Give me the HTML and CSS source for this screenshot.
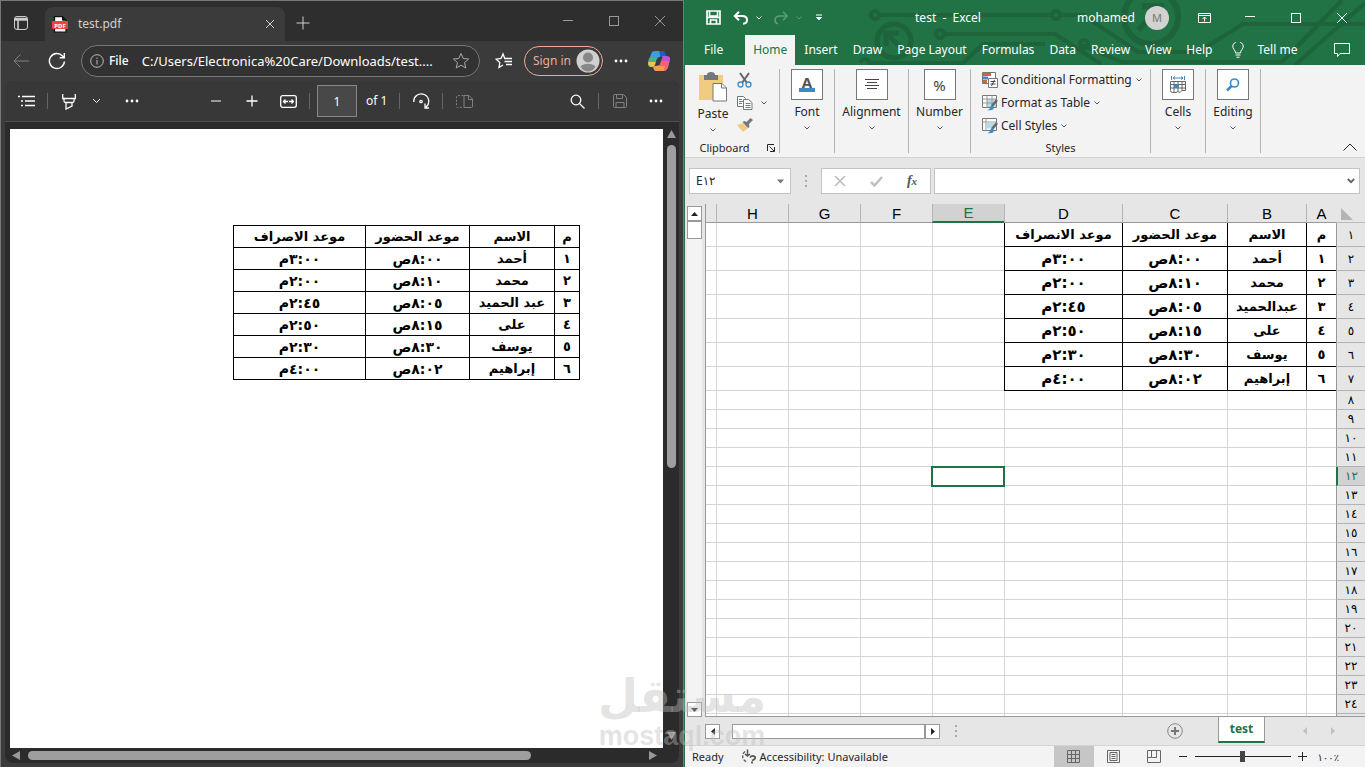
FILE: index.html
```html
<!DOCTYPE html>
<html lang="en">
<head>
<meta charset="utf-8">
<title>Desktop</title>
<link rel="stylesheet" href="styles.css">
</head>
<body>
<main class="desktop">
<section class="edge" aria-label="PDF viewer">
  <header class="edge-tabs">
    <button class="tab-actions" aria-label="Tab actions"><svg width="16" height="16" viewBox="0 0 16 16"><rect x="1.5" y="1.5" width="13" height="13" rx="2.5"/><path d="M2 3.500h12M2 5h12M5 5v9.500" stroke-width="1.6"/></svg></button>
    <div class="edge-tab">
      <svg width="16" height="17" viewBox="0 0 16 17"><path d="M2.500 .7h8l3.500 3.500v12h-11.500z" fill="#fff" stroke="#111" stroke-width="1.300"/><path d="M10.500 .7v3.500H14" fill="#111" stroke="#111"/><rect x="0" y="5" width="16" height="8" rx="1" fill="#ea4444" stroke="none"/><text x="8" y="11.500" class="pdf-badge" text-anchor="middle">PDF</text></svg>
      <span class="tab-name">test.pdf</span>
      <button class="tab-close" aria-label="Close tab"><svg width="10" height="10" viewBox="0 0 10 10"><path d="M1 1l8 8M9 1L1 9"/></svg></button>
    </div>
    <button class="new-tab" aria-label="New tab"><svg width="14" height="14" viewBox="0 0 14 14"><path d="M7 .5v13M.5 7h13"/></svg></button>
    <div class="win-controls dim">
      <button aria-label="Minimize"><svg width="10" height="10" viewBox="0 0 10 10"><path d="M0 4.500h10"/></svg></button>
      <button aria-label="Maximize"><svg width="10" height="10" viewBox="0 0 10 10"><rect x=".5" y=".5" width="9" height="9"/></svg></button>
      <button aria-label="Close"><svg width="10" height="10" viewBox="0 0 10 10"><path d="M0 0l10 10M10 0L0 10"/></svg></button>
    </div>
  </header>
  <nav class="edge-nav">
    <button class="tool faded" aria-label="Back"><svg width="16" height="14" viewBox="0 0 16 14"><path d="M16 7H1M7.500 .5L1 7l6.500 6.500"/></svg></button>
    <button class="tool" aria-label="Refresh"><svg width="18" height="18" viewBox="0 0 18 18" stroke-width="1.400"><path d="M16.400 9.500A7.500 7.500 0 1 1 14.500 4L16 5.500M16.300 1v4.700h-4.600"/></svg></button>
    <div class="address">
      <svg width="14" height="14" viewBox="0 0 14 14"><circle cx="7" cy="7" r="6.300"/><path d="M7 6v4.500M7 3.600v1.300"/></svg>
      <span class="scheme">File</span>
      <input class="url" aria-label="Address" value="C:/Users/Electronica%20Care/Downloads/test....">
      <button aria-label="Add favorite"><svg width="18" height="18" viewBox="0 0 18 18" stroke="#aaa"><path d="M9 1.500l2.200 5 5.400.5-4.100 3.600 1.300 5.400L9 13.200 4.200 16l1.300-5.400L1.400 7l5.400-.5z"/></svg></button>
    </div>
    <button class="tool fav" aria-label="Favorites"><svg width="18" height="18" viewBox="0 0 18 18"><path d="M12 6.500H9.800L8 2 6 6.500l-4.800.7 3.600 3.300L4 15.500l4-2.500M10.500 6.500H17M9.500 9.500H17M11 12.500h6" stroke-width="1.300"/></svg></button>
    <button class="sign-in">Sign in <svg width="24" height="24" viewBox="0 0 24 24" stroke="none"><circle cx="12" cy="12" r="11.500" fill="#d0d0d0"/><circle cx="12" cy="8.500" r="5" fill="#888"/><path d="M4.500 17q7.500-4.500 15 0-1.500 5-7.500 5.500-6-.5-7.500-5.500z" fill="#888"/></svg></button>
    <button class="tool" aria-label="Settings"><svg width="14" height="4" viewBox="0 0 14 4" fill="#fff" stroke="none"><circle cx="2" cy="2" r="1.400"/><circle cx="7" cy="2" r="1.400"/><circle cx="12" cy="2" r="1.400"/></svg></button>
    <button class="tool copilot" aria-label="Copilot"><svg width="24" height="22" viewBox="0 0 24 22" stroke="none"><path d="M8 1h6q2 0 2.500 3l-4 3q-2 0-3 3l-1 4q-.5 3-3 3H4q-3 0-3-4L4 4q1-3 4-3z" fill="#3aa0dc"/><path d="M2 8h7.500l-1.500 6q-1 3-4 3-3 0-3-4z" fill="#55ae83"/><path d="M1.200 12h7.300q-1 5-3.500 5-4 0-3.800-5z" fill="#edc443"/><path d="M12 1h4q2 0 2.500 3l1 3h-6z" fill="#1761c5"/><path d="M15.500 6H20q3.500 0 3 4l-2 7q-1 4-4.500 4H9q-2 0-2.500-3L6 16h3q2 0 3-3z" fill="#bd56c6"/><path d="M13 11h9.500l-1.500 6q-1 4-4.500 4h-5z" fill="#f2627a"/><path d="M6 16h12l-1 5H9q-2 0-3-5z" fill="#f69a4b"/><path d="M13.500 7h2l-3 8h-2.500z" fill="#3b3b3b"/></svg></button>
  </nav>
  <div class="viewer">
    <div class="pdf-tools">
      <button class="tool" aria-label="Contents"><svg width="17" height="12" viewBox="0 0 17 12" stroke-width="1.300"><path d="M4 1.500h13M7 6h10M7 10.500h10M0 1.500h2M3 6h2M3 10.500h2"/></svg></button>
      <i class="vsep"></i>
      <button class="tool" aria-label="Highlight"><svg width="14" height="17" viewBox="0 0 14 17" stroke-width="1.300"><path d="M.7 1v4.500h12.600V1M2 5.500V8q0 1.500 1.500 1.500h7Q12 9.500 12 8V5.500M4 9.500V16l6-3V9.500"/></svg></button>
      <button class="tool slim" aria-label="Highlight options"><svg width="9" height="6" viewBox="0 0 9 6"><path d="M1 1l3.500 3.500L8 1"/></svg></button>
      <button class="tool more" aria-label="More tools"><svg width="14" height="4" viewBox="0 0 14 4" fill="#fff" stroke="none"><circle cx="2" cy="2" r="1.400"/><circle cx="7" cy="2" r="1.400"/><circle cx="12" cy="2" r="1.400"/></svg></button>
      <button class="tool zoom-out" aria-label="Zoom out"><svg width="12" height="12" viewBox="0 0 12 12"><path d="M1 6h10" stroke-width="1.500" stroke="#bbb"/></svg></button>
      <button class="tool" aria-label="Zoom in"><svg width="12" height="12" viewBox="0 0 12 12" stroke-width="1.300"><path d="M6 .5v11M.5 6h11"/></svg></button>
      <button class="tool" aria-label="Fit to width"><svg width="17" height="13" viewBox="0 0 17 13" stroke-width="1.300"><rect x=".7" y=".7" width="15.600" height="11.600" rx="2"/><path d="M3.500 6.500h10M5.500 4.500l-2 2 2 2M11.500 4.500l2 2-2 2"/><path d="M8 6.500h1" stroke="#383838"/></svg></button>
      <i class="vsep"></i>
      <input class="page-no" aria-label="Page" value="1">
      <span class="page-of">of 1</span>
      <i class="vsep"></i>
      <button class="tool" aria-label="Rotate"><svg width="17" height="17" viewBox="0 0 17 17" stroke-width="1.300"><path d="M.8 9A7.500 7.500 0 1 1 13 14.200M12 10.500v4.500h4"/><circle cx="8" cy="8.500" r="1.200"/></svg></button>
      <i class="vsep"></i>
      <button class="tool faded" aria-label="Page view"><svg width="17" height="13" viewBox="0 0 17 13"><path d="M7.500 .6H1.500q-1 0-1 1v9.800q0 1 1 1h6" stroke-dasharray="2 1.500"/><path d="M8 .5h5l3.500 3.500v7.500q0 1-1 1H8zM12.500 .5V4.500h4"/></svg></button>
      <span class="spacer"></span>
      <button class="tool" aria-label="Find"><svg width="15" height="15" viewBox="0 0 15 15" stroke-width="1.300"><circle cx="6" cy="6" r="4.800"/><path d="M9.500 9.500l5 5"/></svg></button>
      <i class="vsep"></i>
      <button class="tool faded" aria-label="Save"><svg width="14" height="14" viewBox="0 0 14 14"><path d="M1.500 .5h9l3 3v9q0 1-1 1h-11q-1 0-1-1v-11q0-1 1-1zM3.500 .5v4h6v-4M3 13.500v-5h8v5"/></svg></button>
      <button class="tool" aria-label="More"><svg width="14" height="4" viewBox="0 0 14 4" fill="#fff" stroke="none"><circle cx="2" cy="2" r="1.400"/><circle cx="7" cy="2" r="1.400"/><circle cx="12" cy="2" r="1.400"/></svg></button>
    </div>
    <div class="doc-area">
      <article class="page" dir="rtl" lang="ar">
        <table class="pdf-table">
          <colgroup><col class="p-num"><col class="p-name"><col class="p-in"><col class="p-out"></colgroup>
          <tr><th>م</th><th>الاسم</th><th>موعد الحضور</th><th>موعد الاصراف</th></tr>
          <tr><td>١</td><td>أحمد</td><td class="time">٨:٠٠ص</td><td class="time">٣:٠٠م</td></tr>
          <tr><td>٢</td><td>محمد</td><td class="time">٨:١٠ص</td><td class="time">٢:٠٠م</td></tr>
          <tr><td>٣</td><td>عبد الحميد</td><td class="time">٨:٠٥ص</td><td class="time">٢:٤٥م</td></tr>
          <tr><td>٤</td><td>على</td><td class="time">٨:١٥ص</td><td class="time">٢:٥٠م</td></tr>
          <tr><td>٥</td><td>يوسف</td><td class="time">٨:٣٠ص</td><td class="time">٢:٣٠م</td></tr>
          <tr><td>٦</td><td>إبراهيم</td><td class="time">٨:٠٢ص</td><td class="time">٤:٠٠م</td></tr>
        </table>
      </article>
      <div class="pdf-vscroll"><svg width="9" height="8" viewBox="0 0 9 8"><path d="M4.500 0L9 8H0z"/></svg><i class="thumb"></i><svg width="9" height="8" viewBox="0 0 9 8"><path d="M4.500 8L9 0H0z"/></svg></div>
    </div>
    <div class="pdf-hscroll"><svg width="8" height="9" viewBox="0 0 8 9"><path d="M0 4.500L8 0v9z"/></svg><i class="thumb"></i><svg width="8" height="9" viewBox="0 0 8 9"><path d="M8 4.500L0 0v9z"/></svg></div>
  </div>
</section>

<section class="excel" aria-label="Excel">
  <header class="xl-head">
    <svg class="circuit" width="510" height="65" viewBox="0 0 510 65"><g fill="none" stroke="#1d633c" stroke-width="4"><circle cx="20" cy="15" r="4"/><path d="M25 15h155"/><circle cx="85" cy="34" r="4"/><path d="M90 34h105"/><circle cx="39" cy="41" r="17" stroke-width="5"/><path d="M48 50L32 34M31 46V33h13" stroke-width="5"/><path d="M6 63a4 4 0 0 1 8 0h94l20-19h62M180 15h17M206 15h22l55 37h60l45-28h122M180 34h20l46 30M227 45l40 17h160M427 62l60-62M440 65l70-62"/><circle cx="201" cy="15" r="4"/><circle cx="229" cy="44" r="4"/><circle cx="296" cy="17" r="27" stroke-width="6"/><path d="M283 30l22-22M287 6h19v18" stroke-width="6"/></g></svg>
    <div class="xl-title">
      <button class="q-save" aria-label="Save"><svg width="15" height="15" viewBox="0 0 15 15" stroke-width="1.700"><path d="M1 1h13v13H1zM3.500 1v5h8V1M1 7.500h13M4.500 14v-4h6v4"/></svg></button>
      <button class="q-btn" aria-label="Undo"><svg width="16" height="14" viewBox="0 0 16 14" stroke-width="2"><path d="M6 .8L1.800 5 6 9.200M2 5h7q5 0 5 4 0 3.500-4 3.800"/></svg></button>
      <button class="q-chev" aria-label="Undo list"><svg width="6" height="4" viewBox="0 0 6 4"><path d="M.5 .5L3 3 5.500 .5"/></svg></button>
      <button class="q-btn q-off" aria-label="Redo"><svg width="16" height="14" viewBox="0 0 16 14" stroke-width="1.500"><path d="M10 .8L14.200 5 10 9.200M14 5H7Q2 5 2 9q0 3.500 3 3.800"/></svg></button>
      <button class="q-chev q-off" aria-label="Redo list"><svg width="6" height="4" viewBox="0 0 6 4"><path d="M.5 .5L3 3 5.500 .5"/></svg></button>
      <button class="q-chev q-custom" aria-label="Customize toolbar"><svg width="6" height="7" viewBox="0 0 6 7"><path d="M0 1h6"/><path d="M.5 3.500h5L3 6z" fill="#fff"/></svg></button>
      <span class="doc-title">test&nbsp; -&nbsp; Excel</span>
      <span class="user">mohamed</span><span class="avatar">M</span>
      <div class="win-controls">
        <button aria-label="Ribbon options"><svg width="13" height="10" viewBox="0 0 13 10"><path d="M.5 .5h12v9H.5zM.5 2.500h12M6.500 8.500V4M4.500 6l2-2 2 2"/></svg></button>
        <button aria-label="Minimize"><svg width="10" height="10" viewBox="0 0 10 10"><path d="M0 3.500h10"/></svg></button>
        <button aria-label="Maximize"><svg width="10" height="10" viewBox="0 0 10 10"><rect x=".5" y=".5" width="9" height="9"/></svg></button>
        <button aria-label="Close"><svg width="10" height="10" viewBox="0 0 10 10"><path d="M0 0l10 10M10 0L0 10"/></svg></button>
      </div>
    </div>
    <nav class="xl-tabs">
      <button class="file">File</button><button class="active">Home</button><button>Insert</button><button>Draw</button><button>Page Layout</button><button>Formulas</button><button>Data</button><button>Review</button><button>View</button><button>Help</button>
      <button class="tell"><svg width="12" height="16" viewBox="0 0 12 16"><path d="M3.500 11q0-2-1.500-3.500a5 5 0 1 1 8 0Q8.500 9 8.500 11zM3.500 13h5M4.500 15.200h3"/></svg>Tell me</button>
      <button class="comment" aria-label="Comments"><svg width="16" height="15" viewBox="0 0 16 15"><path d="M.5 .5h15v10H6l-2.500 3v-3h-3z"/></svg></button>
    </nav>
  </header>

  <div class="ribbon">
    <div class="group clipboard">
      <div class="clip-body">
        <button class="paste"><svg width="30" height="30" viewBox="0 0 30 30" stroke="none"><path d="M1 3h24v25H1z" fill="#f0cb80"/><path d="M6 3h3q0-3 4-3t4 3h3v5H6z" fill="#777"/><path d="M15 11.500h9l4.500 4.500v13H15z" fill="#fff" stroke="#777"/><path d="M23.500 11.500V16h5" fill="none" stroke="#777"/></svg><span>Paste</span><svg class="cv" width="6" height="4" viewBox="0 0 6 4"><path d="M.5 .5L3 3 5.500 .5"/></svg></button>
        <div class="clip-side">
          <button aria-label="Cut"><svg width="15" height="16" viewBox="0 0 15 16"><path d="M3 1l7 10M12 1L5 11" stroke="#666" stroke-width="2"/><circle cx="3.500" cy="12.500" r="2.500" stroke="#3a8ac8" stroke-width="1.300"/><circle cx="11.500" cy="12.500" r="2.500" stroke="#3a8ac8" stroke-width="1.300"/></svg></button>
          <button aria-label="Copy"><svg width="16" height="14" viewBox="0 0 16 14"><path d="M.5 .5h6l2 2v8h-8z" fill="#fff" stroke="#777"/><path d="M2 3.500h3M2 5.500h4M2 7.500h3" stroke="#3a8ac8"/><path d="M6.500 3.500h5l3.500 3v7H6.500z" fill="#fff" stroke="#777"/><path d="M8.500 7.500h5M8.500 9.500h5M8.500 11.500h5" stroke="#3a8ac8"/></svg><svg class="cv" width="6" height="4" viewBox="0 0 6 4"><path d="M.5 .5L3 3 5.500 .5"/></svg></button>
          <button aria-label="Format painter"><svg width="16" height="14" viewBox="0 0 16 14" stroke="none"><path d="M0 7l6-2 5 5-5 4z" fill="#f0cb80"/><path d="M5.500 4l2-1 2 1 4-4L16 2l-4 4 .5 3-1.500 1z" fill="#777"/></svg></button>
        </div>
      </div>
      <div class="group-name">Clipboard <svg width="8" height="8" viewBox="0 0 8 8"><path d="M.5 7V.5H7M2.500 2.500L7 7M7.500 3v4.500H3"/></svg></div>
    </div>
    <button class="group big font"><span class="box font-box">A</span>Font<svg class="cv" width="6" height="4" viewBox="0 0 6 4"><path d="M.5 .5L3 3 5.500 .5"/></svg></button>
    <button class="group big align"><span class="box"><svg width="14" height="12" viewBox="0 0 14 12"><path d="M0 .5h14M2 3.500h10M0 6.500h14M2 9.500h10"/></svg></span>Alignment<svg class="cv" width="6" height="4" viewBox="0 0 6 4"><path d="M.5 .5L3 3 5.500 .5"/></svg></button>
    <button class="group big number"><span class="box">%</span>Number<svg class="cv" width="6" height="4" viewBox="0 0 6 4"><path d="M.5 .5L3 3 5.500 .5"/></svg></button>
    <div class="group styles">
      <div class="style-list">
        <button><svg width="16" height="16" viewBox="0 0 16 16"><path d="M.5 .5h13v11H.5z" fill="#fff" stroke="#777"/><path d="M1 1h8v3H1zM1 8h4v3H1z" fill="#d9603b" stroke="none"/><path d="M1 4.500h5v3H1z" fill="#3a8ac8" stroke="none"/><path d="M6.500 6.500h9v9h-9z" fill="#fff" stroke="#777"/><path d="M8.500 9.500h5M8.500 12h5M12.500 8l-3 6" stroke="#444"/></svg>Conditional Formatting<svg class="cv" width="6" height="4" viewBox="0 0 6 4"><path d="M.5 .5L3 3 5.500 .5"/></svg></button>
        <button><svg width="16" height="16" viewBox="0 0 16 16"><path d="M.5 .5h14v12H.5z" fill="#fff" stroke="#777"/><path d="M5 4h9v8H5z" fill="#b9dae4" stroke="none"/><path d="M.5 4h14M.5 8h14M5 .5v12M10 .5v12" stroke="#999"/><path d="M15 5l-5 6" stroke="#666" stroke-width="2.500"/><path d="M5 15q3 0 3-3l2-2 2 2q0 4-7 3z" fill="#3a8ac8" stroke="none"/></svg>Format as Table<svg class="cv" width="6" height="4" viewBox="0 0 6 4"><path d="M.5 .5L3 3 5.500 .5"/></svg></button>
        <button><svg width="16" height="16" viewBox="0 0 16 16"><path d="M.5 .5h14v12H.5z" fill="#fff" stroke="#777"/><path d="M.5 4h14M4 .5v12" stroke="#999"/><path d="M4.500 4.500h9v6h-9z" fill="#b9dae4" stroke="none"/><path d="M15 5l-5 6" stroke="#666" stroke-width="2.500"/><path d="M5 15q3 0 3-3l2-2 2 2q0 4-7 3z" fill="#3a8ac8" stroke="none"/></svg>Cell Styles<svg class="cv" width="6" height="4" viewBox="0 0 6 4"><path d="M.5 .5L3 3 5.500 .5"/></svg></button>
      </div>
      <div class="group-name">Styles</div>
    </div>
    <button class="group big cells"><span class="box"><svg width="16" height="17" viewBox="0 0 16 17"><path d="M1.500 0v4M14.500 0v4M3 2h10M5 .5L3 2l2 1.500M11 .5L13 2l-2 1.500" stroke="#3a8ac8"/><path d="M.5 5.500h15v9H12l-2 2-2-1-2 1H2.500q-2 0-2-2zM.5 8.500h15M.5 12h15M4 5.500V16M8 5.500v10M12 5.500V15" stroke="#666"/><path d="M4 8.500h5V12H4z" fill="#3a8ac8" stroke="none"/></svg></span>Cells<svg class="cv" width="6" height="4" viewBox="0 0 6 4"><path d="M.5 .5L3 3 5.500 .5"/></svg></button>
    <button class="group big editing"><span class="box"><svg width="14" height="14" viewBox="0 0 14 14" stroke="#3a8ac8"><circle cx="8.500" cy="5" r="4" stroke-width="1.600"/><path d="M5.500 8L1 12.500" stroke-width="2.500"/></svg></span>Editing<svg class="cv" width="6" height="4" viewBox="0 0 6 4"><path d="M.5 .5L3 3 5.500 .5"/></svg></button>
    <button class="collapse" aria-label="Collapse ribbon"><svg width="14" height="8" viewBox="0 0 14 8"><path d="M.5 7.500L7 1l6.500 6.500"/></svg></button>
  </div>

  <div class="formula">
    <div class="name-box"><input aria-label="Name box" value="E١٢"><svg width="7" height="5" viewBox="0 0 7 5"><path d="M0 .5h7L3.500 4.500z" fill="#777" stroke="none"/></svg></div>
    <svg class="grip" width="2" height="12" viewBox="0 0 2 12"><path d="M1 0v2M1 5v2M1 10v2" stroke="#aaa" stroke-width="2"/></svg>
    <div class="fx-box">
      <button aria-label="Cancel"><svg width="12" height="10" viewBox="0 0 12 10" stroke="#c0c0c0" stroke-width="1.700"><path d="M1 0l10 10M11 0L1 10"/></svg></button>
      <button aria-label="Enter"><svg width="13" height="11" viewBox="0 0 13 11" stroke="#c0c0c0" stroke-width="2.500"><path d="M1 6l3.500 3.500L12 1"/></svg></button>
      <button class="fx" aria-label="Insert function">f<small>x</small></button>
    </div>
    <div class="formula-input"><input aria-label="Formula"><svg width="8" height="6" viewBox="0 0 8 6" stroke="#666" stroke-width="2"><path d="M.8 1L4 4.200 7.200 1"/></svg></div>
  </div>

  <div class="sheet-area">
    <div class="xl-vscroll"><button class="arrow" aria-label="Scroll up"><svg width="7" height="4" viewBox="0 0 7 4"><path d="M3.500 0L7 4H0z"/></svg></button><i class="thumb"></i><span class="spacer"></span><button class="arrow" aria-label="Scroll down"><svg width="7" height="4" viewBox="0 0 7 4"><path d="M3.500 4L7 0H0z"/></svg></button></div>
    <div class="sheet" dir="rtl">
      <table class="grid">
        <colgroup><col class="c-head"><col class="c-a"><col class="c-b"><col class="c-c"><col class="c-d"><col class="c-e"><col class="c-e"><col class="c-e"><col class="c-e"><col></colgroup>
        <thead><tr><th class="corner"><svg width="12" height="12" viewBox="0 0 12 12"><path d="M0 0v12h12z" fill="#b4b4b4" stroke="none"/></svg></th><th>A</th><th>B</th><th>C</th><th>D</th><th class="sel">E</th><th>F</th><th>G</th><th>H</th><th></th></tr></thead>
        <tbody id="rows"></tbody>
      </table>
    </div>
  </div>

  <div class="sheet-bar">
    <div class="xl-hscroll"><button class="arrow" aria-label="Scroll left"><svg width="4" height="7" viewBox="0 0 4 7"><path d="M0 3.500L4 0v7z"/></svg></button><i class="thumb"></i><button class="arrow" aria-label="Scroll right"><svg width="4" height="7" viewBox="0 0 4 7"><path d="M4 3.500L0 0v7z"/></svg></button></div>
    <svg class="bar-grip" width="2" height="12" viewBox="0 0 2 12"><path d="M1 0v2M1 5v2M1 10v2" stroke="#aaa" stroke-width="2"/></svg>
    <span class="spacer"></span>
    <button class="add-sheet" aria-label="New sheet"><svg width="16" height="16" viewBox="0 0 16 16"><circle cx="8" cy="8" r="7.300" stroke="#888"/><path d="M8 4v8M4 8h8" stroke="#777" stroke-width="2"/></svg></button>
    <button class="sheet-tab">test</button>
    <div class="sheet-nav"><svg width="4" height="8" viewBox="0 0 4 8"><path d="M0 4L4 0v8z"/></svg><svg width="4" height="8" viewBox="0 0 4 8"><path d="M4 4L0 0v8z"/></svg></div>
  </div>

  <footer class="status">
    <span>Ready</span>
    <svg class="acc-icon" width="16" height="15" viewBox="0 0 16 15" stroke="#555" stroke-width="1.300"><path d="M4 2.500A6 6 0 0 0 6 13" stroke-dasharray="3 1.500"/><path d="M6.500 .5v6M4 5l2.500 2L9 5" stroke-width="1.500"/><path d="M9 8.500q2.500-3 5 -.5 1 2-3 3.500M11 12.500v2" stroke-width="1.800"/></svg>
    <span>Accessibility: Unavailable</span>
    <span class="spacer"></span>
    <button class="view on" aria-label="Normal"><svg width="13" height="13" viewBox="0 0 13 13"><path d="M.5 .5h12v12H.5zM.5 4.500h12M.5 8.500h12M4.500 .5v12M8.500 .5v12"/></svg></button>
    <button class="view" aria-label="Page layout"><svg width="13" height="13" viewBox="0 0 13 13"><path d="M.5 .5h12v12H.5zM3 2.500h7v8H3zM4.500 4.500h4M4.500 6.500h4M4.500 8.500h4"/></svg></button>
    <button class="view" aria-label="Page break preview"><svg width="14" height="13" viewBox="0 0 14 13"><path d="M.5 .5h13v12H.5zM4.500 .5v7h5v-7M.5 7.500h4M9.500 4v3.500"/></svg></button>
    <button class="zbtn" aria-label="Zoom out"><svg width="8" height="8" viewBox="0 0 8 8"><path d="M0 3.500h8"/></svg></button>
    <input class="zoom" type="range" min="0" max="100" value="50" aria-label="Zoom">
    <button class="zbtn" aria-label="Zoom in"><svg width="9" height="9" viewBox="0 0 9 9"><path d="M0 4.500h9M4.500 0v9"/></svg></button>
    <span class="percent" dir="ltr">١٠٠٪</span>
  </footer>
</section>
<div class="watermark"><span class="wm-ar" lang="ar">مستقل</span><span class="wm-en">mostaql.com</span></div>
</main>
<script src="sheet.js"></script>
</body>
</html>
```
FILE: sheet.js
```js
const data = [
  ['م', 'الاسم', 'موعد الحضور', 'موعد الانصراف'],
  ['١', 'أحمد', '٨:٠٠ص', '٣:٠٠م'],
  ['٢', 'محمد', '٨:١٠ص', '٢:٠٠م'],
  ['٣', 'عبدالحميد', '٨:٠٥ص', '٢:٤٥م'],
  ['٤', 'على', '٨:١٥ص', '٢:٥٠م'],
  ['٥', 'يوسف', '٨:٣٠ص', '٢:٣٠م'],
  ['٦', 'إبراهيم', '٨:٠٢ص', '٤:٠٠م']
];
const lastLabel = 24;
const arabic = n => String(n).replace(/\d/g, d => '٠١٢٣٤٥٦٧٨٩'[d]);
const body = document.getElementById('rows');
for (let r = 1; r <= lastLabel + 1; r++) {
  const tr = body.insertRow();
  if (r <= data.length) tr.className = 'filled';
  const head = document.createElement('th');
  if (r <= lastLabel) head.textContent = arabic(r);
  if (r === 12) head.className = 'sel';
  tr.append(head);
  for (let c = 0; c < 9; c++) {
    const td = tr.insertCell();
    if (r <= data.length && c < 4) {
      td.textContent = data[r - 1][c];
      td.className = r > 1 && c > 1 ? 'entry time' : 'entry';
    }
    if (r === 12 && c === 4) td.className = 'cursor';
  }
}
```
FILE: styles.css
```css
* { box-sizing: border-box; }
body { margin: 0; font: 12px/16px "Noto Sans", "DejaVu Sans", sans-serif; color: #262626; fill: none; stroke: currentColor; }
button, input { font: inherit; color: inherit; background: none; border: 0; padding: 0; margin: 0; outline: 0; min-width: 0; }
button { display: flex; align-items: center; justify-content: center; white-space: nowrap; }
svg { flex: none; display: block; }
.spacer { flex: 1; }
.desktop { position: relative; display: grid; grid-template-columns: 684fr 681fr; grid-template-rows: minmax(0, 1fr); height: 100vh; overflow: hidden; }

/* browser window */
.edge { display: flex; flex-direction: column; min-width: 0; background: #3b3b3b; color: #fff; border: solid #777; border-width: 1px 1px 0; }
.edge-tabs { display: flex; height: 40px; background: #2e2e2e; }
.tab-actions { width: 40px; padding-top: 4px; color: #ccc; }
.edge-tab { display: flex; align-items: center; gap: 10px; flex: 0 1 240px; margin: 6px 0 0 4px; padding: 0 10px 0 7px; background: #3b3b3b; border-radius: 8px 8px 0 0; color: #d0d0d0; }
.pdf-badge { font: bold 6px "Noto Sans", sans-serif; fill: #fff; stroke: none; }
.tab-name { flex: 1; }
.new-tab { width: 36px; color: #ccc; padding-top: 4px; }
.win-controls { display: flex; margin-left: auto; }
.win-controls button { width: 46px; }
.dim { color: #999; }
.edge-nav { display: flex; align-items: center; height: 40px; padding: 0 4px 0 2px; }
.tool { width: 36px; height: 32px; flex: none; }
.faded { color: #808080; }
.address { display: flex; align-items: center; flex: 1; height: 32px; min-width: 0; margin-left: 6px; padding: 0 9px 0 8px; background: #323232; border: 1px solid #777; border-radius: 16px; }
.address > svg { color: #bbb; }
.scheme { margin: 0 13px 0 5px; font-weight: 500; }
.url { flex: 1; font-size: 13px; }
.fav { width: 44px; padding-left: 4px; }
.sign-in { gap: 5px; height: 30px; padding: 0 2px 0 8px; border: 1px solid #f0a898; border-radius: 15px; color: #f0a898; flex: none; }
.copilot { width: 40px; }
.viewer { display: flex; flex-direction: column; flex: 1; min-height: 0; margin: 0 4px 4px; border-radius: 8px; background: #2b2b2b; overflow: hidden; }
.pdf-tools { display: flex; align-items: center; height: 41px; padding: 0 5px 0 3px; background: #383838; border-bottom: 1px solid #505050; }
.vsep { width: 1px; height: 16px; margin: 0 3px; background: #666; }
.slim { width: 18px; }
.more { margin-left: 9px; }
.zoom-out { margin-left: 48px; }
.page-no { width: 40px; height: 32px; margin: 0 9px 0 4px; border: 1px solid #888; background: #484848; text-align: center; }
.page-of { margin-right: 9px; }
.doc-area { display: flex; flex: 1; min-height: 0; }
.page { flex: 1; margin: 7px 0 0 5px; background: #fff; padding: 96px 83px 0; color: #000; }
.pdf-table { border-collapse: collapse; table-layout: fixed; width: 347px; }
.pdf-table th, .pdf-table td { height: 22px; padding: 0; border: 1px solid #000; text-align: center; font: bold 13px/18px "DejaVu Sans", sans-serif; white-space: nowrap; }
.pdf-table .time { font-size: 14px; }
.p-num { width: 25px; }
.p-name { width: 85px; }
.p-in { width: 104px; }
.pdf-vscroll { display: flex; flex-direction: column; align-items: center; justify-content: space-between; width: 16px; padding: 8px 0; }
.pdf-vscroll svg, .pdf-hscroll svg { fill: #999; stroke: none; }
.pdf-vscroll .thumb { width: 9px; flex: 0 0 53%; margin: 7px 0 auto; border-radius: 5px; background: #9e9e9e; }
.pdf-hscroll { display: flex; align-items: center; height: 15px; padding: 0 22px 0 7px; }
.pdf-hscroll .thumb { height: 9px; flex: 0 0 78%; margin: 0 auto 0 8px; border-radius: 5px; background: #9e9e9e; }

/* spreadsheet window */
.excel { display: flex; flex-direction: column; min-width: 0; background: #e6e6e6; border-left: 1px solid #217346; }
.xl-head { position: relative; background: #217346; color: #fff; overflow: hidden; }
.circuit { position: absolute; right: 0; top: 0; }
.xl-title { position: relative; display: flex; align-items: center; height: 35px; }
.q-save { width: 28px; margin-left: 14px; }
.q-btn { width: 28px; }
.q-chev { width: 8px; }
.q-off { color: #5f9b79; }
.q-btn.q-off { margin-left: 4px; }
.q-custom { margin-left: 12px; }
.doc-title { flex: 1; text-align: center; padding-right: 4px; }
.user { margin-right: 10px; }
.avatar { width: 24px; height: 24px; border-radius: 50%; background: #d2d2d2; color: #777; font-size: 11px; line-height: 24px; text-align: center; margin-right: 12px; }
.xl-title .win-controls { margin-left: 0; }
.xl-tabs { position: relative; display: flex; height: 30px; }
.xl-tabs button { padding: 0 8px 0 7px; }
.xl-tabs .file { margin: 0 14px 0 12px; }
.xl-tabs .active { background: #f3f3f3; color: #217346; padding: 0 8px; margin-right: 2px; }
.xl-tabs .tell { gap: 14px; margin-left: 4px; }
.xl-tabs .comment { margin-left: auto; padding-right: 15px; }
.ribbon { display: flex; height: 93px; padding: 4px 0; background: #f3f3f3; border-bottom: 1px solid #d2d2d2; }
.group { display: flex; flex-direction: column; align-items: center; border-right: 1px solid #b4b4b4; flex: none; }
.cv { color: #555; }
.clipboard { width: 95px; }
.clip-body { display: flex; flex: 1; gap: 4px; width: 100%; padding: 3px 0 0 13px; }
.paste { flex-direction: column; justify-content: flex-start; width: 30px; }
.paste span { margin: 4px 0 6px; }
.clip-side { display: flex; flex-direction: column; gap: 8px; align-items: flex-start; padding-left: 5px; }
.clip-side button { gap: 8px; }
.group-name { display: flex; align-items: center; gap: 17px; font-size: 11px; line-height: 10px; }
.clipboard .group-name { padding-left: 10px; }
.big { justify-content: flex-start; }
.box { display: flex; align-items: center; justify-content: center; width: 32px; height: 31px; margin-bottom: 4px; background: #fff; border: 1px solid #777; font-size: 15px; color: #444; }
.font-box { padding-bottom: 6px; font-weight: bold; color: #555; background: linear-gradient(#3a8ac8, #3a8ac8) 7px 18px / 16px 4px no-repeat #fff; }
.big .cv { margin-top: 6px; }
.font { width: 55px; }
.align { width: 74px; }
.number { width: 62px; }
.styles { width: 180px; }
.style-list { display: flex; flex-direction: column; flex: 1; align-self: stretch; gap: 7px; padding: 3px 0 0 11px; }
.style-list button { justify-content: flex-start; gap: 3px; height: 16px; }
.style-list .cv { margin-left: 1px; }
.cells, .editing { width: 55px; }
.collapse { margin: auto 8px 2px auto; }
.formula { display: flex; align-items: center; height: 46px; padding: 0 5px 0 4px; }
.name-box, .fx-box, .formula-input { display: flex; align-items: center; height: 26px; background: #fff; border: 1px solid #c3c3c3; }
.name-box { width: 102px; padding: 0 6px; }
.name-box input, .formula-input input { flex: 1; }
.grip { margin: 0 14px; }
.fx-box { width: 110px; margin-right: 3px; }
.fx-box button { flex: 1; }
.fx-box .fx { font: italic bold 14px/16px "Liberation Serif", serif; color: #555; }
.fx small { font-size: 11px; }
.formula-input { flex: 1; padding-right: 4px; }
.sheet-area { display: flex; flex: 1; min-height: 0; }
.xl-vscroll { display: flex; flex-direction: column; width: 15px; margin: 2px 3px 0 2px; background: #f3f3f3; }
.arrow { width: 15px; height: 15px; flex: none; background: #fff; border: 1px solid #999; }
.arrow svg { fill: #222; stroke: none; }
.xl-vscroll .thumb { height: 18px; background: #fff; border: 1px solid #999; }
.sheet { flex: 1; min-width: 0; overflow: hidden; background: #fff; border-bottom: 1px solid #999; }
.grid { border-collapse: separate; border-spacing: 0; table-layout: fixed; width: 100%; background: #fff; border-left: 1px solid #999; }
.c-head { width: 29px; }
.c-a { width: 30px; }
.c-b { width: 79px; }
.c-c { width: 105px; }
.c-d { width: 118px; }
.c-e { width: 72px; }
.grid th, .grid td { padding: 0; overflow: hidden; white-space: nowrap; text-align: center; }
.grid thead th { height: 19px; background: #e6e6e6; border: solid #999; border-width: 0 0 1px; border-left: 1px solid #b4b4b4; font: 15px/17px "Liberation Sans", sans-serif; color: #000; }
.grid thead th.corner { border-left: 0; border-bottom-color: #bbb; }
.corner svg { margin: 1px 12px 0 0; }
.grid thead .sel { background: #d2d2d2; color: #217346; border-bottom: 2px solid #217346; }
.grid tbody th { height: 19px; background: #e6e6e6; border-bottom: 1px solid #b4b4b4; border-left: 1px solid #999; font: 12px/14px "DejaVu Sans", sans-serif; color: #000; }
.grid tbody .sel { background: #d2d2d2; border-left: 2px solid #217346; color: #217346; }
.grid td { border-bottom: 1px solid #d4d4d4; border-left: 1px solid #d4d4d4; }
.grid td:last-child, .grid thead th:last-child { border-left: 0; }
.grid .filled th, .grid .filled td { height: 24px; }
.grid .entry { border-color: #000; font: bold 13px/20px "DejaVu Sans", sans-serif; color: #000; }
.grid .time { font-size: 15px; }
.grid .cursor { outline: 2px solid #217346; outline-offset: -1px; }
.sheet-bar { display: flex; align-items: center; height: 28px; flex: none; }
.xl-hscroll { display: flex; flex: 0 0 235px; margin-left: 20px; }
.xl-hscroll .thumb { flex: 1; margin-left: 12px; border: 1px solid #999; background: #fff; }
.bar-grip { margin-left: 15px; }
.add-sheet { margin-right: 35px; }
.sheet-tab { align-self: flex-start; width: 47px; height: 26px; background: #fff; border: solid #999; border-width: 0 1px; border-bottom: 2px solid #217346; color: #217346; font-weight: bold; }
.sheet-nav { display: flex; gap: 24px; padding: 0 30px 0 38px; }
.sheet-nav svg { fill: #c0c0c0; stroke: none; }
.status { display: flex; align-items: center; height: 22px; flex: none; padding: 0 26px 0 7px; background: #f3f3f3; border-top: 1px solid #d4d4d4; font-size: 11px; }
.acc-icon { margin: 0 3px 0 17px; }
.view { width: 40px; height: 21px; color: #666; }
.view.on { background: #c6c6c6; }
.zbtn { width: 18px; }
.zoom { appearance: none; width: 96px; height: 12px; margin: 0 3px; background: linear-gradient(#222, #222) center / 100% 1px no-repeat; }
.zoom::-webkit-slider-thumb { appearance: none; width: 5px; height: 11px; background: #444; }
.percent { margin-left: 6px; font-size: 10px; }

.watermark { position: absolute; left: 598px; bottom: 18px; width: 168px; display: flex; flex-direction: column; align-items: center; color: rgba(190, 190, 190, 0.42); font-weight: bold; pointer-events: none; }
.wm-ar { font: bold 46px/54px "DejaVu Sans", sans-serif; }
.wm-en { font: bold 27px/26px "Liberation Sans", sans-serif; }
```
